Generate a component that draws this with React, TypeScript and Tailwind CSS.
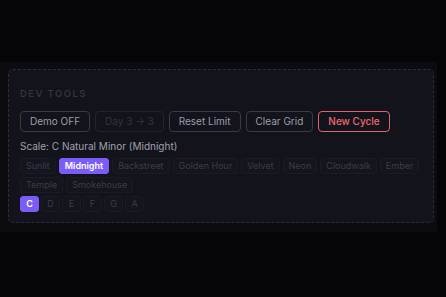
const presets = ["Sunlit", "Midnight", "Backstreet", "Golden Hour", "Velvet", "Neon", "Cloudwalk", "Ember", "Temple", "Smokehouse"];
const roots = ["C", "D", "E", "F", "G", "A"];

function ToolButton({ label, tone = "default" }: { label: string; tone?: "default" | "disabled" | "danger" }) {
  const cls =
    tone === "danger"
      ? "border-[#e0626a] font-medium text-[#f0676e]"
      : tone === "disabled"
        ? "border-[#23232d] text-[#34343f]"
        : "border-[#3a3a47] text-[#9d9dab]";
  return (
    <button className={`h-[21px] rounded-[4px] border px-[9px] text-[10px] leading-none ${cls}`}>{label}</button>
  );
}

function Chip({ label, active }: { label: string; active?: boolean }) {
  return (
    <span
      className={`flex h-[16px] items-center rounded-[3px] border px-[5px] text-[9px] leading-none ${
        active ? "border-[#7b5cf6] bg-[#7b5cf6] font-semibold text-white" : "border-[#1b1b25] bg-[#15151e] text-[#3c3c4a]"
      }`}
    >
      {label}
    </span>
  );
}

export default function App() {
  return (
    <div className="h-[297px] w-[446px] bg-[#050507] pt-[62px]" style={{ fontFamily: "Inter, 'Noto Sans', sans-serif" }}>
      <div className="w-[437px] bg-[#0b0b10] pb-[9px] pl-[8px] pr-[3px] pt-[7px]">
        <div className="rounded-[5px] border border-dashed border-[#2c2c3a] bg-[#13131b] px-[11px] pb-[10px] pt-[19px]">
          <div className="text-[9.5px] font-semibold uppercase leading-none tracking-[0.15em] text-[#34343f]">Dev Tools</div>
          <div className="mt-[12px] flex gap-[5px]">
            <ToolButton label="Demo OFF" />
            <ToolButton label="Day 3 → 3" tone="disabled" />
            <ToolButton label="Reset Limit" />
            <ToolButton label="Clear Grid" />
            <ToolButton label="New Cycle" tone="danger" />
          </div>
          <div className="mt-[9px] text-[10px] leading-none text-[#a0a0ae]">Scale: C Natural Minor (Midnight)</div>
          <div className="mt-[7px] flex flex-wrap gap-[3px]">
            {presets.map((p) => (
              <Chip key={p} label={p} active={p === "Midnight"} />
            ))}
          </div>
          <div className="mt-[3px] flex gap-[2px]">
            {roots.map((r) => (
              <span
                key={r}
                className={`flex h-[16px] w-[19px] items-center justify-center rounded-[3px] border text-[9px] leading-none ${
                  r === "C" ? "border-[#7b5cf6] bg-[#7b5cf6] font-semibold text-white" : "border-[#1b1b25] bg-[#15151e] text-[#3c3c4a]"
                }`}
              >
                {r}
              </span>
            ))}
          </div>
        </div>
      </div>
    </div>
  );
}
